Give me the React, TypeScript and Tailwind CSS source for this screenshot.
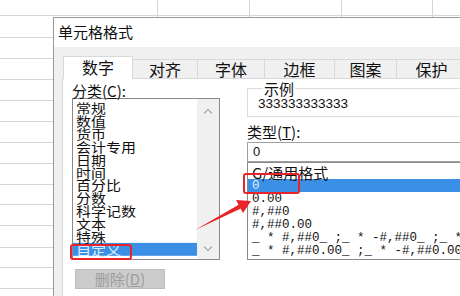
import React from "react";

const cjk = "font-['Noto_Sans_CJK_SC','Noto_Sans',sans-serif]";

const rowHeights = [
  "h-[16px]", "h-[22px]", "h-[21px]", "h-[21px]", "h-[21px]", "h-[21px]", "h-[21px]",
  "h-[21px]", "h-[21px]", "h-[20px]", "h-[21px]", "h-[22px]", "h-[20px]", "h-[21px]",
];
const colWidths = ["w-[158px]", "w-[92px]", "w-[92px]", "w-[91px]", "w-[92px]"];

const categories = [
  "常规", "数值", "货币", "会计专用", "日期", "时间", "百分比",
  "分数", "科学记数", "文本", "特殊", "自定义",
];

const formats = [
  "0.00",
  "#,##0",
  "#,##0.00",
  '_ * #,##0_ ;_ * -#,##0_ ;_ * "-"_ ;_ @_ ',
  '_ * #,##0.00_ ;_ * -#,##0.00_ ;_ * "-"??_ ;_ @_ ',
];

const tabs = [
  { label: "对齐", w: "w-[65px]" },
  { label: "字体", w: "w-[67px]" },
  { label: "边框", w: "w-[70px]" },
  { label: "图案", w: "w-[62px]" },
  { label: "保护", w: "w-[70px]" },
];

function Chevron({ up }: { up?: boolean }) {
  return (
    <svg width="10" height="6" viewBox="0 0 10 6" className="mx-auto">
      <path
        d={up ? "M1 5.5 L5 1.5 L9 5.5" : "M1 0.5 L5 4.5 L9 0.5"}
        fill="none"
        stroke="#a6a6a6"
        strokeWidth="1.2"
      />
    </svg>
  );
}

function Sheet() {
  return (
    <div className="flex flex-col">
      {rowHeights.map((h, i) => (
        <div key={i} className={`${h} flex border-b border-[#d6d6d6]`}>
          {colWidths.map((w, j) => (
            <div key={j} className={`${w} shrink-0 border-r border-[#d6d6d6]`} />
          ))}
        </div>
      ))}
    </div>
  );
}

function CategoryList() {
  // the screenshot is squashed vertically: rows of 15px scaled to ~12.9px
  return (
    <div className="flex h-[162px] w-[148px] border border-[#8a8a8a]">
      <div className="flex-1 overflow-hidden pt-[2px]">
        <div className="origin-top scale-y-[0.86]">
          {categories.map((c) => (
            <div
              key={c}
              className={`h-[15px] pl-[3px] text-[15px] leading-[15px] whitespace-nowrap ${
                c === "自定义" ? "bg-[#3b8fe5] text-[#dfeeff]" : "text-[#111]"
              }`}
            >
              {c}
            </div>
          ))}
        </div>
      </div>
      <div className="flex w-[22px] flex-col justify-between bg-[#f0f0f0] pt-[9px] pb-[7px]">
        <Chevron up />
        <Chevron />
      </div>
    </div>
  );
}

function TypeList() {
  return (
    <div className="h-[98px] overflow-hidden border border-[#8a8a8a] bg-white">
      <div className="h-[16px] pl-[4px] text-[15px] leading-[19px] text-[#111] whitespace-nowrap">
        G/通用格式
      </div>
      <div className="h-[13px] bg-[#3b8fe5] pl-[4px] font-['Liberation_Mono',monospace] text-[12.5px] leading-[14px] text-[#dfeeff]">
        0
      </div>
      {formats.map((f) => (
        <div
          key={f}
          className="h-[13px] pl-[4px] font-['Liberation_Mono',monospace] text-[12.5px] leading-[15px] text-[#111] whitespace-pre"
        >
          {f}
        </div>
      ))}
    </div>
  );
}

function Dialog() {
  return (
    <div className="absolute left-[53px] top-[17px] flex h-[300px] w-[430px] flex-col border border-[#9a9a9a] bg-[#f0f0f0]">
      <div className="flex h-[29px] items-center bg-white pl-[4px] text-[15px] text-[#111]">单元格格式</div>
      <div className="flex flex-1 flex-col pt-[9px] pl-[9px]">
        <div className="flex h-[22px] items-end">
          <div className="relative z-10 -mb-px flex h-[23px] w-[70px] items-center justify-center border border-b-0 border-[#d9d9d9] bg-white pb-[2px] text-[16px] text-[#111]">
            数字
          </div>
          {tabs.map((t) => (
            <div
              key={t.label}
              className={`${t.w} flex h-[19px] shrink-0 items-center justify-center border-t border-r border-[#d9d9d9] bg-[#f0f0f0] text-[16px] text-[#111]`}
            >
              {t.label}
            </div>
          ))}
        </div>
        <div className="-ml-px flex flex-1 border border-[#d9d9d9] bg-white">
          <div className="w-[184px] shrink-0 pl-[9px] pt-[4px]">
            <div className="h-[15px] text-[15px] leading-[15px] text-[#111]">
              分类(<u>C</u>):
            </div>
            <CategoryList />
            <div className="mt-[9px] ml-[3px] flex h-[20px] w-[90px] items-center justify-center border border-[#bdbdbd] bg-[#cccccc] text-[15px] text-[#9c9c9c]">
              删除(<u>D</u>)
            </div>
          </div>
          <div className="w-[240px] shrink-0 pt-[2px]">
            <fieldset className="h-[36px] border border-[#dcdcdc] pl-[10px]">
              <legend className="ml-[5px] px-[1px] text-[15px] leading-[15px] text-[#111]">示例</legend>
              <div className="pt-[1px] font-['Liberation_Sans',Arial,sans-serif] text-[13.5px] leading-[14px] text-[#111]">
                333333333333
              </div>
            </fieldset>
            <div className="mt-[7px] h-[15px] text-[15px] leading-[15px] text-[#111]">
              类型(<u>T</u>):
            </div>
            <div className="mt-[3px] flex h-[20px] items-center border border-[#a0a0a0] bg-white pl-[5px] font-['Liberation_Sans',Arial,sans-serif] text-[13px] text-[#111]">
              0
            </div>
            <TypeList />
          </div>
        </div>
      </div>
    </div>
  );
}

export default function App() {
  return (
    <div className={`relative h-[296px] w-[460px] overflow-hidden bg-white ${cjk}`}>
      <Sheet />
      <Dialog />
      {/* annotations */}
      <div className="absolute left-[70px] top-[244px] h-[16px] w-[62px] rounded-[3px] border-2 border-[#e8232a]" />
      <div className="absolute left-[243px] top-[173px] h-[21px] w-[57px] rounded-[3px] border-2 border-[#e8232a]" />
      <svg className="absolute left-0 top-0" width="460" height="296" viewBox="0 0 460 296">
        <polygon points="195,230 240.9,208.6 239.1,204.6" fill="#e8232a" />
        <polygon points="251,201 243,213 236,200" fill="#e8232a" />
      </svg>
    </div>
  );
}
